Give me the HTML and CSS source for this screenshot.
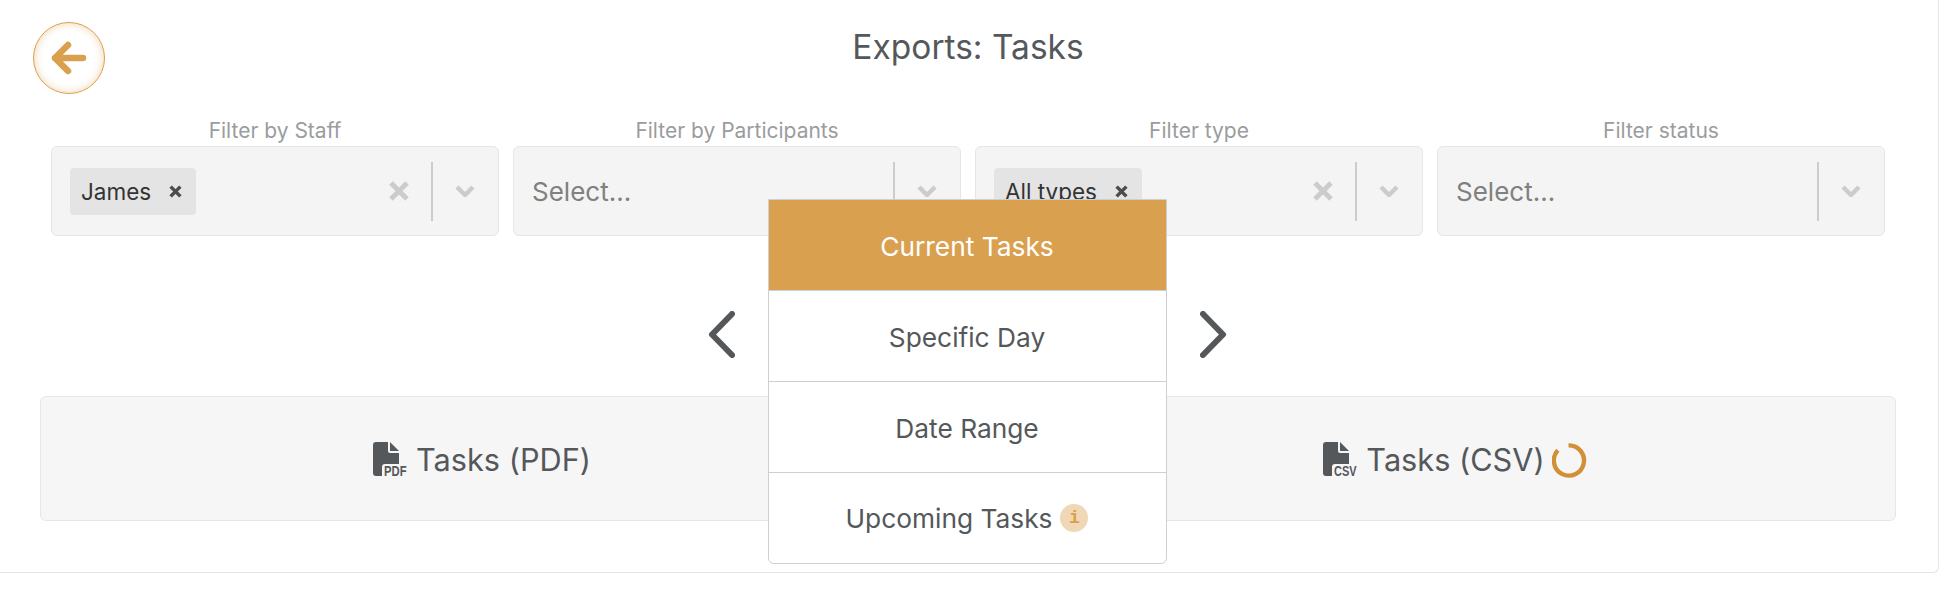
FILE: index.html
```html
<!DOCTYPE html>
<html lang="en">
<head>
    <meta charset="UTF-8">
    <meta name="viewport" content="width=device-width, initial-scale=1.0">
    <title>Exports: Tasks</title>
    <link rel="stylesheet" href="styles.css">
</head>
<body>
    <div class="page">
        <div class="header">
            <button class="back">
                <svg width="36" height="36" viewBox="0 0 36 36"><path d="M4 18h28M17 5 4 18l13 13"/></svg>
            </button>
            <h1>Exports: Tasks</h1>
        </div>

        <div class="filters">
            <div class="filter">
                <label>Filter by Staff</label>
                <div class="control">
                    <div class="value">
                        <span class="tag">James<svg class="tag-x" viewBox="0 0 12 12"><path d="M1.5 1.5l9 9M10.5 1.5l-9 9"/></svg></span>
                    </div>
                    <svg class="clear" viewBox="0 0 22 22"><path d="M3 3l16 16M19 3 3 19"/></svg>
                    <span class="divider"></span>
                    <span class="arrow"><svg viewBox="0 0 20 12"><path d="M2 2l8 8 8-8"/></svg></span>
                </div>
            </div>
            <div class="filter">
                <label>Filter by Participants</label>
                <div class="control">
                    <div class="value placeholder">Select...</div>
                    <span class="divider"></span>
                    <span class="arrow"><svg viewBox="0 0 20 12"><path d="M2 2l8 8 8-8"/></svg></span>
                </div>
            </div>
            <div class="filter">
                <label>Filter type</label>
                <div class="control">
                    <div class="value">
                        <span class="tag">All types<svg class="tag-x" viewBox="0 0 12 12"><path d="M1.5 1.5l9 9M10.5 1.5l-9 9"/></svg></span>
                    </div>
                    <svg class="clear" viewBox="0 0 22 22"><path d="M3 3l16 16M19 3 3 19"/></svg>
                    <span class="divider"></span>
                    <span class="arrow"><svg viewBox="0 0 20 12"><path d="M2 2l8 8 8-8"/></svg></span>
                </div>
            </div>
            <div class="filter">
                <label>Filter status</label>
                <div class="control">
                    <div class="value placeholder">Select...</div>
                    <span class="divider"></span>
                    <span class="arrow"><svg viewBox="0 0 20 12"><path d="M2 2l8 8 8-8"/></svg></span>
                </div>
            </div>
        </div>

        <div class="nav">
            <svg class="nav-arrow" viewBox="0 0 27 47"><path d="M24 3 4 23.500l20 20.500"/></svg>
            <div class="picker">
                <div class="menu">
                    <div class="menu-item active">Current Tasks</div>
                    <div class="menu-item">Specific Day</div>
                    <div class="menu-item">Date Range</div>
                    <div class="menu-item">Upcoming Tasks <span class="info">i</span></div>
                </div>
            </div>
            <svg class="nav-arrow" viewBox="0 0 27 47"><path d="M3 3l20 20.500L3 44"/></svg>
        </div>

        <div class="exports">
            <div class="export">
                <svg class="file" width="40" height="40" viewBox="0 0 40 40">
                    <path d="M3 0H15V9Q15 11 17 11H26V22H12Q9 22 9 25V34H3Q0 34 0 31V3Q0 0 3 0Z"/>
                    <path d="M17 0 26 9H17Z"/>
                    <text x="11" y="34" textLength="22.500" lengthAdjust="spacingAndGlyphs">PDF</text>
                </svg>
                <span>Tasks (PDF)</span>
            </div>
            <div class="export csv">
                <svg class="file" width="40" height="40" viewBox="0 0 40 40">
                    <path d="M3 0H15V9Q15 11 17 11H26V22H12Q9 22 9 25V34H3Q0 34 0 31V3Q0 0 3 0Z"/>
                    <path d="M17 0 26 9H17Z"/>
                    <text x="11" y="34" textLength="22.500" lengthAdjust="spacingAndGlyphs">CSV</text>
                </svg>
                <span>Tasks (CSV)</span>
                <svg class="spinner" width="35" height="35" viewBox="0 0 36 36"><path d="M17 2.500A15.500 15.500 0 1 1 6 7.500"/></svg>
            </div>
        </div>
    </div>
</body>
</html>
```

FILE: styles.css
```css
* {
    box-sizing: border-box;
}
body {
    margin: 0;
    font-family: Inter, Lato, sans-serif;
    font-variant-ligatures: none;
    background-color: white;
    color: #54585b;
}
.page {
    width: 1939px;
    height: 573px;
    border-right: 1px solid #e5e5e5;
    border-bottom: 1px solid #e5e5e5;
    border-bottom-right-radius: 6px;
    padding-top: 22px;
}
.header {
    display: grid;
    grid-template-columns: 1fr auto 1fr;
    padding: 0 35px 0 33px;
    height: 72px;
}
.header h1 {
    margin: 0;
    padding-top: 1px;
    font-size: 33.500px;
    font-weight: 400;
    line-height: 48px;
}
.back {
    width: 72px;
    height: 72px;
    padding: 0;
    border: 1px solid #e09a45;
    border-radius: 50%;
    background-color: white;
    box-shadow: inset 0 0 8px rgba(217, 160, 80, 0.45);
    display: flex;
    justify-content: center;
    align-items: center;
}
.back svg {
    fill: none;
    stroke: #d9a050;
    stroke-width: 6.500;
    stroke-linecap: round;
    stroke-linejoin: round;
}
.filters {
    display: grid;
    grid-template-columns: repeat(4, 448px);
    gap: 14px;
    margin-top: 24px;
    padding-left: 51px;
}
.filter label {
    display: block;
    height: 28px;
    line-height: 26px;
    font-size: 21px;
    color: #9a9c9e;
    text-align: center;
}
.control {
    height: 90px;
    display: flex;
    align-items: center;
    padding-left: 18px;
    background-color: #f4f4f4;
    border: 1px solid #e6e6e6;
    border-radius: 6px;
}
.value {
    flex: 1;
    display: flex;
}
.placeholder {
    padding-top: 1px;
    font-size: 26px;
    color: #808080;
}
.tag {
    height: 47px;
    padding: 1px 14px 0 11px;
    display: flex;
    align-items: center;
    gap: 18px;
    background-color: #e4e4e4;
    border-radius: 4px;
    font-size: 22.500px;
    color: #333;
}
.tag-x {
    width: 13px;
    height: 13px;
    fill: none;
    stroke: #4a4d50;
    stroke-width: 3.200;
}
.clear {
    width: 22px;
    height: 22px;
    margin-right: 21px;
    fill: none;
    stroke: #cccccc;
    stroke-width: 5;
}
.divider {
    width: 2px;
    height: 59px;
    background-color: #cccccc;
}
.arrow {
    width: 65px;
    padding-right: 2px;
    display: flex;
    justify-content: center;
}
.arrow svg {
    width: 20px;
    height: 12px;
    fill: none;
    stroke: #cccccc;
    stroke-width: 4.500;
}
.nav {
    display: flex;
    justify-content: center;
    gap: 33px;
    margin-top: 75px;
    padding-right: 4px;
}
.nav-arrow {
    width: 27px;
    height: 47px;
    fill: none;
    stroke: #54585b;
    stroke-width: 6;
    stroke-linecap: round;
    stroke-linejoin: round;
}
.picker {
    position: relative;
    width: 399px;
    height: 47px;
}
.menu {
    position: absolute;
    top: -112px;
    left: 0;
    width: 399px;
    background-color: white;
    border: 1px solid #cfcfcf;
    border-radius: 0 0 6px 6px;
    overflow: hidden;
}
.menu-item {
    height: 91px;
    padding-top: 2px;
    display: flex;
    justify-content: center;
    align-items: center;
    gap: 8px;
    font-size: 26.300px;
    border-bottom: 1px solid #cfcfcf;
}
.menu-item:last-child {
    border-bottom: none;
    height: 90px;
    padding-top: 0;
}
.menu-item.active {
    background-color: #d9a050;
    color: white;
}
.info {
    width: 28px;
    height: 28px;
    display: flex;
    justify-content: center;
    align-items: center;
    border-radius: 50%;
    background-color: #f0d8b6;
    color: #d9a050;
    font-family: "Liberation Mono", monospace;
    font-size: 18px;
    font-weight: bold;
}
.exports {
    display: grid;
    grid-template-columns: 884px 884px;
    gap: 88px;
    margin-top: 38px;
    padding-left: 40px;
}
.export {
    height: 125px;
    padding-top: 1px;
    display: flex;
    justify-content: center;
    align-items: center;
    background-color: #f6f6f6;
    border: 1px solid #e6e6e6;
    border-radius: 6px;
    font-size: 30.700px;
}
.export.csv {
    padding-left: 2px;
}
.file {
    margin-right: 3px;
    margin-top: 6px;
    fill: #54585b;
}
.file text {
    font-family: "Liberation Sans", sans-serif;
    font-size: 14px;
    font-weight: bold;
}
.spinner {
    margin-left: 7px;
    margin-top: 2px;
    fill: none;
    stroke: #d38f35;
    stroke-width: 4.500;
}
```
